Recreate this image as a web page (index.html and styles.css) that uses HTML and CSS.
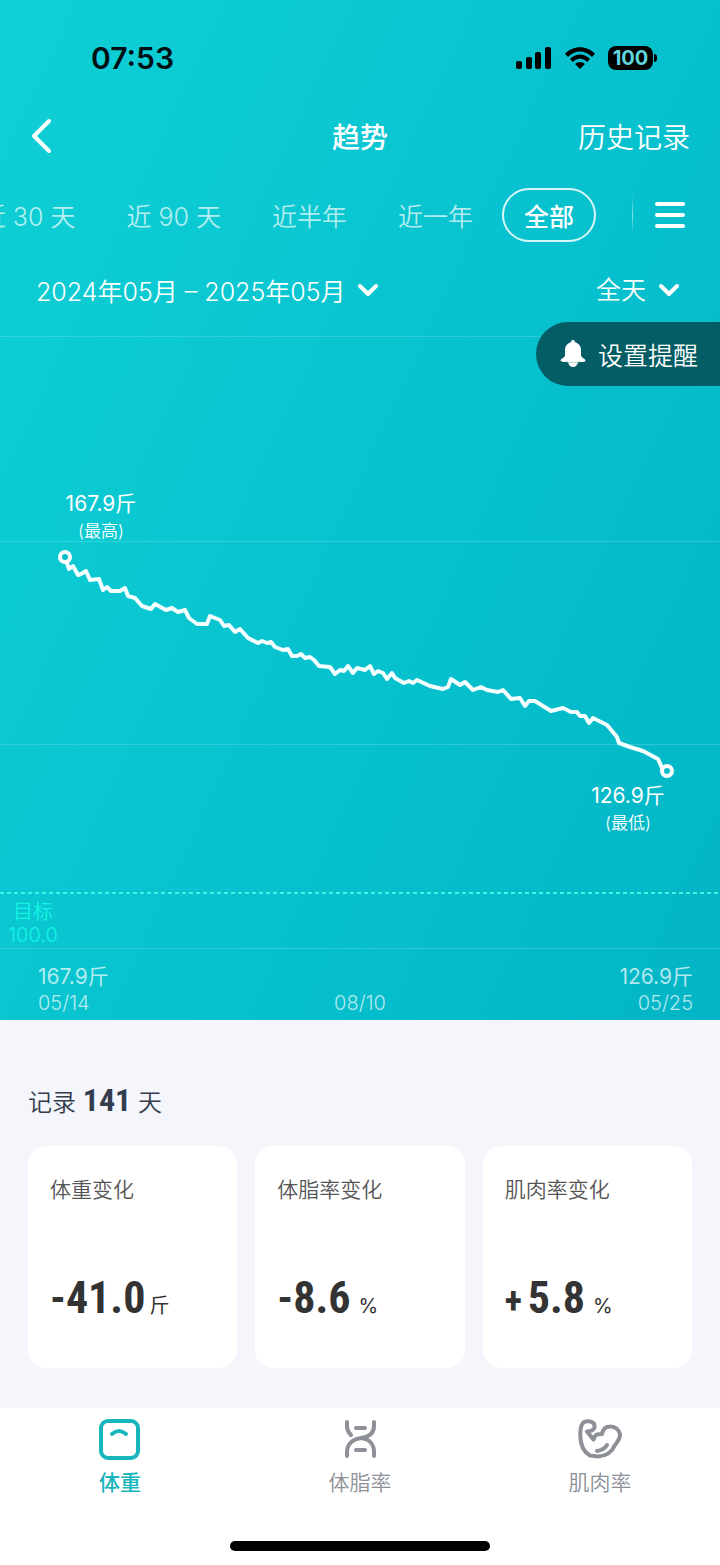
FILE: index.html
```html
<!DOCTYPE html>
<html lang="zh-CN">
<head>
  <meta charset="UTF-8">
  <meta name="viewport" content="width=device-width, initial-scale=1.0">
  <title>趋势</title>
  <link rel="stylesheet" href="styles.css">
</head>
<body>
  <main>
    <section class="hero">
      <!-- Status bar -->
      <div class="status-bar">
        <span class="clock">07:53</span>
        <div class="status-icons">
          <svg width="36" height="24" viewBox="0 0 36 24">
            <rect x="0" y="15" width="6" height="8" rx="2"/>
            <rect x="10" y="11" width="6" height="12" rx="2"/>
            <rect x="19" y="6" width="6" height="17" rx="2"/>
            <rect x="29" y="1" width="6" height="22" rx="2"/>
          </svg>
          <svg width="30" height="24" viewBox="0 0 30 24">
            <path d="M0 7.800C8-1 22-1 30 7.800L27 11C20 3.600 10 3.600 3 11Z"/>
            <path d="M5 13C10.500 7 19.500 7 25 13L22 16C18 11.800 12 11.800 8 16Z"/>
            <path d="M10 18C12.800 15.300 17.200 15.300 20 18L15 23Z"/>
          </svg>
          <span class="battery">100</span>
        </div>
      </div>

      <!-- Title bar -->
      <header class="title-bar">
        <button class="back" aria-label="返回">
          <svg width="22" height="36" viewBox="0 0 22 36"><path d="M19 3L4 18L19 33"/></svg>
        </button>
        <h1>趋势</h1>
        <a class="history" href="#history">历史记录</a>
      </header>

      <!-- Range tabs -->
      <div class="filters">
        <div class="tabs">
          <button class="tab">近 30 天</button>
          <button class="tab">近 90 天</button>
          <button class="tab">近半年</button>
          <button class="tab">近一年</button>
          <button class="tab active">全部</button>
        </div>
        <span class="divider"></span>
        <button class="menu" aria-label="菜单">
          <svg width="32" height="28" viewBox="0 0 32 28"><path d="M3 3H29M3 14H29M3 25H29"/></svg>
        </button>
      </div>

      <div class="period">
        <button class="range">2024年05月 – 2025年05月
          <svg width="20" height="14" viewBox="0 0 20 14"><path d="M2 3L10 11L18 3"/></svg>
        </button>
        <div class="day-part">
          <select aria-label="时段">
            <option>全天</option>
          </select>
          <svg width="20" height="14" viewBox="0 0 20 14"><path d="M2 3L10 11L18 3"/></svg>
        </div>
      </div>

      <!-- Weight chart -->
      <div class="chart">
        <svg class="plot" viewBox="0 0 720 613">
          <path class="grid" d="M0 .5H720M0 205.500H720M0 408.500H720M0 612.500H720"/>
          <path class="goal-line" d="M0 557H720"/>
          <path class="trend" d="M65 221L69 233L73 230L78 239L81 238L86 235L90 244L99 243L103 254L107 251L111 255L120 255L125 252L128 260L135 262L142 270L151 273L155 268L166 274L172 272L178 276L185 274L189 282L197 288L207 288L210 280L220 284L224 290L229 289L235 296L240 293L248 302L258 307L262 305L267 307L271 306L275 311L283 314L288 313L292 320L297 320L301 318L305 322L310 321L314 324L319 330L330 331L335 338L340 334L344 335L348 330L353 337L357 332L365 334L370 330L374 338L378 335L383 337L387 343L392 337L395 342L404 347L409 345L413 347L417 344L430 350L443 353L448 351L451 343L460 349L465 346L473 354L481 351L487 354L498 356L503 354L511 363L520 362L525 370L529 365L535 365L551 375L559 373L563 372L571 376L577 376L580 380L585 380L589 387L593 382L607 389L617 401L619 407L630 411L643 415L658 423L663 434"/>
          <circle class="point" cx="65" cy="221" r="5"/>
          <circle class="point" cx="667" cy="435" r="5"/>
          <g class="labels">
            <text class="value" x="101" y="175">167.9斤</text>
            <text class="note" x="101" y="201">(最高)</text>
            <text class="value" x="628" y="467">126.9斤</text>
            <text class="note" x="628" y="493">(最低)</text>
            <text class="goal" x="33" y="583">目标</text>
            <text class="goal" x="33" y="606">100.0</text>
          </g>
        </svg>
        <button class="reminder">
          <svg width="26" height="28" viewBox="0 0 26 28">
            <path d="M13 0C14.500 0 15 1 15 2.200C19 3.200 21 6.500 21 10V15C21 18 25 18 25.500 20.500C25.500 22 23 22 18 22C17.500 25 15.500 27 13 27C10.500 27 8.500 25 8 22C3 22 .5 22 .5 20.500C1 18 5 18 5 15V10C5 6.500 7 3.200 11 2.200C11 1 11.500 0 13 0Z"/>
            <path class="bell-rim" d="M6 21.500C9 23 17 23 20 21.500"/>
          </svg>
          设置提醒
        </button>
      </div>

      <div class="axis">
        <div class="start"><strong>167.9斤</strong><span>05/14</span></div>
        <div class="middle"><span>08/10</span></div>
        <div class="end"><strong>126.9斤</strong><span>05/25</span></div>
      </div>
    </section>

    <!-- Summary cards -->
    <section class="summary">
      <h2>记录 <span class="days">141</span> 天</h2>
      <div class="cards">
        <div class="card">
          <h3>体重变化</h3>
          <p><span class="number">-41.0</span><span class="unit">斤</span></p>
        </div>
        <div class="card">
          <h3>体脂率变化</h3>
          <p><span class="number">-8.6</span><span class="unit percent">%</span></p>
        </div>
        <div class="card">
          <h3>肌肉率变化</h3>
          <p><span class="number"><span class="plus">+</span>5.8</span><span class="unit percent">%</span></p>
        </div>
      </div>
    </section>
  </main>

  <!-- Bottom navigation -->
  <nav>
    <div class="nav-items">
      <a class="nav-item active" href="#weight">
        <svg width="44" height="42" viewBox="0 0 44 42">
          <rect x="3" y="2" width="37" height="37" rx="7"/>
          <path d="M14 15Q21 9 28 15"/>
        </svg>
        体重
      </a>
      <a class="nav-item" href="#fat">
        <svg width="44" height="42" viewBox="0 0 44 42">
          <path d="M9 3V7Q9 12 13 16M36 3V7C36 15 30 18 23 19C15 20 9 25 9 33V37M23 19C31 20 36 25 36 33V37M18 9H27M18 31H27"/>
        </svg>
        体脂率
      </a>
      <a class="nav-item" href="#muscle">
        <svg width="44" height="42" viewBox="0 0 44 42">
          <path d="M9 12.500L15.500 20.500Q17 16 19 15.500L24 15C25 10 28 7.500 32 7.500C37 7 41 11 42 15C42.500 20 40 22 37 26C34 33 29 37 20 37.500L12 36.500C6 33 2 26 2.300 15C2.300 9 3 5 6 3C11 1 16 3 16.500 6.500C17 11 13 12.500 9 12.500M19 32Q26 31 29 26"/>
        </svg>
        肌肉率
      </a>
    </div>
    <div class="home-indicator"></div>
  </nav>
</body>
</html>
```
FILE: styles.css
```css
/* General Styles */
* {
  box-sizing: border-box;
}

body {
  font-family: Inter, "Noto Sans CJK SC", sans-serif;
  margin: 0;
  background: #f4f6fb;
  color: #333d4d;
}

h1, h2, h3, p {
  margin: 0;
  font-weight: 400;
}

button, select {
  font: inherit;
  color: inherit;
  background: none;
  border: none;
  padding: 0;
  cursor: pointer;
}

a {
  color: inherit;
  text-decoration: none;
}

svg {
  display: block;
}

.hero {
  background: linear-gradient(115deg, #0fd0d5 0%, #08c3cf 50%, #02b5c6 100%);
  color: #fff;
}

/* Status bar */
.status-bar {
  display: flex;
  justify-content: space-between;
  align-items: center;
  padding: 42px 67px 0 91px;
  height: 74px;
  color: #001014;
}

.clock {
  font-size: 30px;
  font-weight: 600;
}

.status-icons {
  display: flex;
  align-items: center;
  gap: 13px;
}

.battery {
  position: relative;
  width: 45px;
  height: 24px;
  line-height: 24px;
  border-radius: 8px;
  background: #000;
  color: #5fd6dd;
  text-align: center;
  font-size: 20px;
  font-weight: 700;
}

.battery::after {
  content: "";
  position: absolute;
  left: 46px;
  top: 8px;
  width: 3px;
  height: 8px;
  border-radius: 0 3px 3px 0;
  background: #000;
}

/* Title bar */
.title-bar {
  display: grid;
  grid-template-columns: 1fr auto 1fr;
  align-items: center;
  height: 64px;
  margin-top: 30px;
  padding: 0 30px;
}

.title-bar h1 {
  font-size: 28px;
  font-weight: 500;
}

.back svg, .menu svg, .period svg {
  fill: none;
  stroke: #fff;
  stroke-width: 4;
  stroke-linecap: round;
  stroke-linejoin: round;
}

.back {
  justify-self: start;
}

.history {
  justify-self: end;
  font-size: 28px;
  font-weight: 350;
}

/* Range tabs */
.filters {
  display: flex;
  align-items: center;
  margin-top: 20px;
  padding-right: 34px;
}

.tabs {
  display: flex;
  flex: 1;
  justify-content: flex-end;
  gap: 7px;
  overflow: hidden;
}

.tab {
  flex: none;
  height: 54px;
  padding: 0 20px;
  border: 2px solid transparent;
  border-radius: 27px;
  font-size: 25px;
  font-weight: 350;
  color: rgba(255, 255, 255, 0.7);
}

.tab.active {
  border-color: rgba(255, 255, 255, 0.85);
  color: #fff;
  font-weight: 500;
}

.divider {
  width: 1px;
  height: 40px;
  margin: 0 21px 0 36px;
  background: linear-gradient(transparent, rgba(255, 255, 255, 0.5), transparent);
}

/* Date range */
.period {
  display: flex;
  justify-content: space-between;
  align-items: center;
  height: 48px;
  margin-top: 24px;
  padding: 0 41px 0 36px;
  font-size: 25px;
  font-weight: 350;
}

.range, .day-part {
  display: flex;
  align-items: center;
  gap: 12px;
}

.day-part select {
  appearance: none;
}

/* Chart */
.chart {
  position: relative;
  margin-top: 22px;
}

.plot {
  width: 100%;
  height: auto;
}

.grid {
  fill: none;
  stroke: rgba(255, 255, 255, 0.16);
  stroke-width: 1;
}

.goal-line {
  stroke: #3ff5e2;
  stroke-width: 2;
  stroke-dasharray: 4 3;
}

.trend {
  fill: none;
  stroke: #f4ffff;
  stroke-width: 4;
  stroke-linecap: round;
  stroke-linejoin: round;
}

.point {
  fill: #08bfcb;
  stroke: #fff;
  stroke-width: 4;
}

.labels {
  fill: #fff;
  text-anchor: middle;
}

.value {
  font-size: 21px;
}

.note {
  font-size: 17px;
  font-weight: 350;
}

.goal {
  font-size: 20px;
  font-weight: 350;
  fill: #15f5e4;
}

.reminder {
  position: absolute;
  top: -14px;
  right: 0;
  display: flex;
  align-items: center;
  gap: 12px;
  height: 64px;
  padding: 0 22px 0 24px;
  border-radius: 32px 0 0 32px;
  background: #045d64;
  font-size: 25px;
  font-weight: 350;
}

.reminder svg {
  fill: #fff;
}

.reminder .bell-rim {
  fill: none;
  stroke: #b5ced0;
  stroke-width: 1;
}

.axis {
  display: grid;
  grid-template-columns: 1fr 1fr 1fr;
  align-items: end;
  height: 71px;
  padding: 0 27px 4px;
  font-size: 20px;
  line-height: 26px;
  color: rgba(255, 255, 255, 0.7);
}

.axis strong, .axis span {
  display: block;
  font-weight: 350;
}

.axis strong {
  font-size: 21px;
  font-weight: 400;
}

.start {
  padding-left: 11px;
}

.middle {
  text-align: center;
}

.end {
  text-align: right;
}

/* Summary */
.summary {
  padding: 52px 28px 40px;
}

.summary h2 {
  height: 56px;
  line-height: 56px;
  font-size: 24px;
  font-weight: 350;
}

.days, .number {
  font-family: "Roboto Condensed", "Liberation Sans Narrow", sans-serif;
  font-weight: 700;
}

.days {
  font-size: 32px;
}

.cards {
  display: grid;
  grid-template-columns: 1fr 1fr 1fr;
  gap: 18px;
  margin-top: 18px;
}

.card {
  display: flex;
  flex-direction: column;
  justify-content: space-between;
  height: 222px;
  padding: 28px 22px 32px;
  border-radius: 18px;
  background: #fff;
  color: #333;
}

.card h3 {
  font-size: 21px;
  line-height: 32px;
  font-weight: 350;
  color: #555;
}

.card p {
  display: flex;
  align-items: baseline;
  gap: 4px;
  line-height: 60px;
}

.number {
  font-size: 44px;
}

.plus {
  margin-right: 6px;
  font-size: 36px;
}

.unit {
  font-size: 20px;
}

.percent {
  margin-left: 4px;
}

/* Bottom navigation */
nav {
  padding-bottom: 14px;
  background: #fff;
}

.nav-items {
  display: grid;
  grid-template-columns: 1fr 1fr 1fr;
  height: 133px;
  padding-top: 11px;
}

.nav-item {
  display: flex;
  flex-direction: column;
  align-items: center;
  gap: 7px;
  font-size: 21px;
  line-height: 30px;
  font-weight: 350;
  color: #8d9097;
}

.nav-item.active {
  color: #19b5bd;
  font-weight: 500;
}

.nav-item svg {
  fill: none;
  stroke: currentColor;
  stroke-width: 4;
  stroke-linecap: round;
  stroke-linejoin: round;
}

.home-indicator {
  width: 36%;
  height: 10px;
  margin: 0 auto;
  border-radius: 5px;
  background: #000;
}
```
